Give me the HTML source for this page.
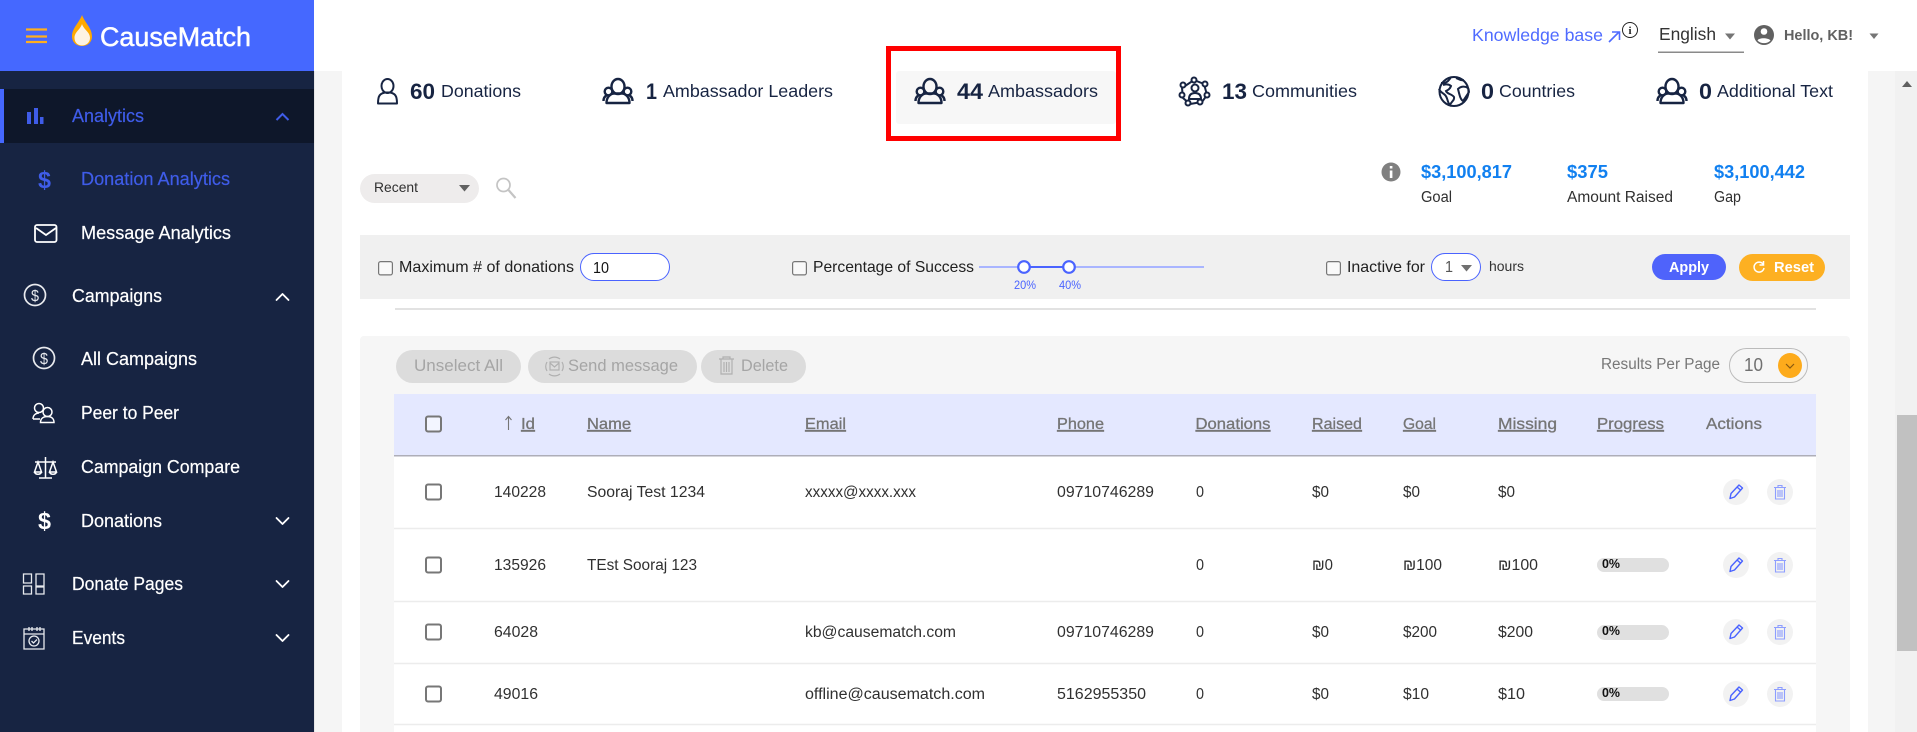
<!DOCTYPE html>
<html lang="en"><head><meta charset="utf-8"><title>CauseMatch</title>
<style>
html,body{margin:0;padding:0;background:#f5f5f5;width:1917px;height:732px;overflow:hidden}
svg{display:block;position:absolute;left:0;top:0}
text{font-family:"Liberation Sans",sans-serif;white-space:pre}
.nav{font-size:18px;fill:#fff;stroke:#fff;stroke-width:.2px}
.blue{fill:#3f5ce8;stroke:#3f5ce8}
.num{font-size:22px;font-weight:700;fill:#172442}
.lab{font-size:17.800px;fill:#172442}
.f{font-size:16px;fill:#212121}
.td{font-size:15.500px;fill:#303030}
.th{font-size:16px;fill:#757575;stroke:#757575;stroke-width:.3px;text-decoration:underline}
.pc{font-size:12.500px;font-weight:700;fill:#111}
.dis{font-size:16.500px;fill:#a5a5a5}
.ic{fill:none;stroke:#172442;stroke-width:2}
.w{fill:none;stroke:#fff;stroke-width:1.8;stroke-linecap:round;stroke-linejoin:round}
</style></head><body>
<svg width="1917" height="732" viewBox="0 0 1917 732" xmlns="http://www.w3.org/2000/svg">
<defs>
<g id="grp" fill="none" stroke="#172442" stroke-width="2.400" stroke-linejoin="round">
<ellipse cx="15" cy="8" rx="6.500" ry="7.500"/><circle cx="5.500" cy="13" r="3.800"/><circle cx="24.500" cy="13" r="3.800"/>
<path d="M0.500 22.500c0-3 1-4.500 3-5.500M29.500 22.500c0-3-1-4.500-3-5.500M3.500 24.500h23c0-5-3-9-7-9.500h-9c-4 .5-7 4.500-7 9.500z"/>
</g>
<g id="chk"><rect x="1" y="1" width="15" height="15" rx="2" fill="#fff" fill-opacity=".55" stroke="#777" stroke-width="2"/></g>
<g id="chs"><rect x=".6" y=".6" width="13.800" height="13.300" rx="2" fill="#fff" fill-opacity=".6" stroke="#767676" stroke-width="1.200"/></g>
<g id="pen">
<circle cx="0" cy="0" r="13" fill="#f2f2f2"/>
<path d="M-6 6.500l1-5L3-7l3.500 3L-1.500 5zM1-5l3.500 3" fill="none" stroke="#4a63ff" stroke-width="1.400" stroke-linejoin="round"/>
</g>
<g id="tr">
<circle cx="0" cy="0" r="13" fill="#f2f2f2"/>
<path d="M-6-4.500H6M-2-4.500v-2h4v2M-4.500-4v11h9v-11M-2-2v7M0-2v7M2-2v7" fill="none" stroke="#8d9dff" stroke-width="1.100"/>
</g>
<g id="dol"><circle cx="0" cy="0" r="10.500" fill="none" stroke="#e8eaee" stroke-width="1.700"/><text x="-4" y="6" font-size="16" fill="#e8eaee" textLength="8" lengthAdjust="spacingAndGlyphs">$</text></g>
</defs>

<!-- page backgrounds -->
<rect x="314" y="0" width="1603" height="71" fill="#fff"/>
<rect x="342" y="71" width="1526" height="661" fill="#fff"/>
<rect x="1895" y="71" width="22" height="661" fill="#f1f1f1"/>
<rect x="1897" y="415" width="20" height="236" fill="#c1c1c1"/>
<path d="M1907 81l5 6h-10z" fill="#606060"/>

<!-- sidebar -->
<rect x="0" y="71" width="314" height="661" fill="#172442"/>
<rect x="314" y="71" width="1" height="661" fill="#e6e6e6"/>
<rect x="0" y="0" width="314" height="71" fill="#4568ff"/>
<path d="M26 29.500h21M26 36.500h21M26 42h21" stroke="#ffae1f" stroke-width="2.200"/>
<path d="M82 15C79 23 72 28 72 36.500 72 42 76 46 82 46s10-4 10-9.500C92 28 85 23 82 15z" fill="#ffa900"/>
<path d="M82 24C80 30 74.500 32 74.500 38 74.500 42.500 78 45.500 82 45.500s8-3 8-7.500C90 32 84 30 82 24z" fill="#fdf3e3"/>
<text x="100" y="46" font-size="27" fill="#fff" stroke="#fff" stroke-width=".5" textLength="151" lengthAdjust="spacingAndGlyphs">CauseMatch</text>

<rect x="0" y="89" width="314" height="54" fill="#0e172a"/>
<rect x="0" y="89" width="4" height="54" fill="#4568ff"/>
<path d="M27 112h4v12h-4zM34 108h4v16h-4zM40 117h3.500v7H40z" fill="#3f5ce8"/>
<text class="nav blue" x="72" y="122" textLength="72" lengthAdjust="spacingAndGlyphs">Analytics</text>
<path d="M276.500 120l6-6 6 6" fill="none" stroke="#3f5ce8" stroke-width="2"/>

<text x="38" y="188" font-size="24" font-weight="700" fill="#3f5ce8" textLength="13" lengthAdjust="spacingAndGlyphs">$</text>
<text class="nav blue" x="81" y="185" textLength="149" lengthAdjust="spacingAndGlyphs">Donation Analytics</text>
<rect x="35" y="225" width="21.500" height="17" rx="2" fill="none" stroke="#fff" stroke-width="1.800"/>
<path d="M36 228l10 7 10-7" fill="none" stroke="#fff" stroke-width="1.800"/>
<text class="nav" x="81" y="239" textLength="150" lengthAdjust="spacingAndGlyphs">Message Analytics</text>

<use href="#dol" x="35" y="295"/>
<text class="nav" x="72" y="302" textLength="90" lengthAdjust="spacingAndGlyphs">Campaigns</text>
<path d="M276.500 300l6-6 6 6" class="w" stroke-width="2"/>
<use href="#dol" x="44" y="358"/>
<text class="nav" x="81" y="365" textLength="116" lengthAdjust="spacingAndGlyphs">All Campaigns</text>

<g fill="none" stroke="#fff" stroke-width="1.500">
<circle cx="39" cy="408" r="4.500"/><circle cx="47.500" cy="412" r="4.500"/>
<path d="M33 419c0-4 3-6 6-6M40.500 422.500c0-4 3-6 7-6s6.500 2 6.500 6zM33 419h7"/>
<path d="M45.500 457v21M39 478h13M35 462h21M38 462l-3.500 10h7zM53 462l-3.500 10h7zM34.500 472c1 3 6 3 7 0M49.500 472c1 3 6 3 7 0"/>
</g>
<text class="nav" x="81" y="419" textLength="98" lengthAdjust="spacingAndGlyphs">Peer to Peer</text>
<text class="nav" x="81" y="473" textLength="159" lengthAdjust="spacingAndGlyphs">Campaign Compare</text>
<text x="38" y="529" font-size="24" font-weight="700" fill="#fff" textLength="13" lengthAdjust="spacingAndGlyphs">$</text>
<text class="nav" x="81" y="527" textLength="81" lengthAdjust="spacingAndGlyphs">Donations</text>
<path d="M276.500 518l6 6 6-6" class="w"/>

<g fill="none" stroke="#e8eaee" stroke-width="1.300">
<path d="M23.500 574h8v9h-8zM36 574h8v12h-8zM23.500 586h8v8h-8zM36 587h8v7h-8z"/>
<path d="M24 629h20v20H24zM24 634h20M29 627v4M32 627v4M37 627v4M40 627v4"/>
<circle cx="34" cy="641" r="5"/><path d="M31.500 641l2 2 3.500-3.500"/>
</g>
<text class="nav" x="72" y="590" textLength="111" lengthAdjust="spacingAndGlyphs">Donate Pages</text>
<path d="M276.500 581l6 6 6-6" class="w"/>
<text class="nav" x="72" y="644" textLength="53" lengthAdjust="spacingAndGlyphs">Events</text>
<path d="M276.500 635l6 6 6-6" class="w"/>

<!-- header right -->
<text x="1472" y="41" font-size="17.500" fill="#4f6bff" textLength="131" lengthAdjust="spacingAndGlyphs">Knowledge base</text>
<path d="M1609 42l10-10M1612 32h7.500v8" fill="none" stroke="#4f6bff" stroke-width="1.600"/>
<circle cx="1630" cy="30" r="7.500" fill="none" stroke="#222" stroke-width="1"/>
<text x="1628.500" y="34" font-size="11" font-weight="700" fill="#222" style="font-family:'Liberation Serif',serif">i</text>
<text x="1659" y="40" font-size="17.400" fill="#333" textLength="57" lengthAdjust="spacingAndGlyphs">English</text>
<path d="M1725 33.500h10l-5 6z" fill="#757575"/>
<rect x="1658" y="51.500" width="86" height="1.500" fill="#8a8a8a"/>
<circle cx="1764" cy="35" r="10" fill="#616161"/>
<circle cx="1764" cy="31.500" r="3.300" fill="#fff"/>
<path d="M1757.500 40.500c1-3 11-3 13 0-3 3.500-10 3.500-13 0z" fill="#fff"/>
<text x="1784" y="40" font-size="14.500" font-weight="700" fill="#616161" textLength="69" lengthAdjust="spacingAndGlyphs">Hello, KB!</text>
<path d="M1869.500 33.500h9l-4.500 5.500z" fill="#757575"/>

<!-- stats row -->
<g class="ic" stroke-width="2.200"><ellipse cx="387.500" cy="86" rx="6" ry="7"/><path d="M378 103.500c0-8 2-10 7-11h5c5 1 7 3 7 11z" stroke-linejoin="round"/></g>
<text class="num" x="410" y="99" textLength="25" lengthAdjust="spacingAndGlyphs">60</text>
<text class="lab" x="441" y="97" textLength="80" lengthAdjust="spacingAndGlyphs">Donations</text>
<use href="#grp" x="603" y="78.500"/>
<text class="num" x="646" y="99" textLength="11" lengthAdjust="spacingAndGlyphs">1</text>
<text class="lab" x="663" y="97" textLength="170" lengthAdjust="spacingAndGlyphs">Ambassador Leaders</text>

<rect x="896" y="71" width="220" height="53" rx="3" fill="#f7f7f7"/>
<rect x="888.500" y="48.500" width="230" height="90" fill="none" stroke="#ff0000" stroke-width="5"/>
<use href="#grp" x="915" y="78.500"/>
<text class="num" x="957" y="99" textLength="26" lengthAdjust="spacingAndGlyphs">44</text>
<text class="lab" x="988" y="97" textLength="110" lengthAdjust="spacingAndGlyphs">Ambassadors</text>

<g class="ic" stroke-width="1.500">
<path d="M1194 80l10 4 3 11-5 7-12 2-7-6-1-10z"/>
<circle cx="1194" cy="80" r="2.500" fill="#fff"/><circle cx="1205" cy="84" r="2.500" fill="#fff"/><circle cx="1207" cy="95" r="2.500" fill="#fff"/><circle cx="1200" cy="102" r="2.500" fill="#fff"/><circle cx="1188" cy="103" r="2.500" fill="#fff"/><circle cx="1182" cy="95" r="2.500" fill="#fff"/><circle cx="1183" cy="85" r="2.500" fill="#fff"/>
<circle cx="1195" cy="88" r="3.500"/><path d="M1189 99c0-4 2-6 6-6s6 2 6 6z"/>
</g>
<text class="num" x="1222" y="99" textLength="25" lengthAdjust="spacingAndGlyphs">13</text>
<text class="lab" x="1252" y="97" textLength="105" lengthAdjust="spacingAndGlyphs">Communities</text>

<g class="ic"><circle cx="1454" cy="91.500" r="14.500"/>
<path d="M1441 83c3 0 5 0 7-2s3-4 3-4M1443 85c3-1 6-1 8 1-1 3-3 4-5 5 1 3 6 3 8 6 1 3-3 5-4 8-3-3-2-7-5-10-2-2-5-3-6-6M1456 78c3 1 5 3 8 2M1458 89c3-3 7-3 10-1 1 2 1 3 1 4-2 3-4 6-6 9-3-2-3-5-4-8z"/></g>
<text class="num" x="1481" y="99" textLength="13" lengthAdjust="spacingAndGlyphs">0</text>
<text class="lab" x="1499" y="97" textLength="76" lengthAdjust="spacingAndGlyphs">Countries</text>
<use href="#grp" x="1657" y="78.500"/>
<text class="num" x="1699" y="99" textLength="13" lengthAdjust="spacingAndGlyphs">0</text>
<text class="lab" x="1717" y="97" textLength="116" lengthAdjust="spacingAndGlyphs">Additional Text</text>

<!-- sort + totals -->
<rect x="360" y="174" width="119" height="29" rx="14.500" fill="#eeecec"/>
<text x="374" y="192" font-size="14" fill="#303030" textLength="44" lengthAdjust="spacingAndGlyphs">Recent</text>
<path d="M459 185h11l-5.500 6.500z" fill="#616161"/>
<circle cx="503.500" cy="185" r="6.500" fill="none" stroke="#c4c4c4" stroke-width="1.700"/>
<path d="M508.500 190l7 8" stroke="#c4c4c4" stroke-width="2.200"/>

<circle cx="1391" cy="172" r="9.500" fill="#808080"/>
<path d="M1389.800 170.500h2.600v7.500h-2.600zM1389.800 166h2.600v2.500h-2.600z" fill="#fff"/>
<g font-size="18" font-weight="700" fill="#1180f0">
<text x="1421" y="178" textLength="91" lengthAdjust="spacingAndGlyphs">$3,100,817</text>
<text x="1567" y="178" textLength="41" lengthAdjust="spacingAndGlyphs">$375</text>
<text x="1714" y="178" textLength="91" lengthAdjust="spacingAndGlyphs">$3,100,442</text>
</g>
<g font-size="15.500" fill="#303030">
<text x="1421" y="202" textLength="31" lengthAdjust="spacingAndGlyphs">Goal</text>
<text x="1567" y="202" textLength="106" lengthAdjust="spacingAndGlyphs">Amount Raised</text>
<text x="1714" y="202" textLength="27" lengthAdjust="spacingAndGlyphs">Gap</text>
</g>

<!-- filter bar -->
<rect x="360" y="235" width="1490" height="64" fill="#f0f0f0"/>
<use href="#chs" x="378" y="261"/>
<text class="f" x="399" y="272" textLength="175" lengthAdjust="spacingAndGlyphs">Maximum # of donations</text>
<rect x="580.500" y="253.500" width="89" height="27" rx="13.500" fill="#fff" stroke="#4a63ff"/>
<text x="593" y="273" font-size="15.500" fill="#111" textLength="16" lengthAdjust="spacingAndGlyphs">10</text>
<use href="#chs" x="792" y="261"/>
<text class="f" x="813" y="272" textLength="161" lengthAdjust="spacingAndGlyphs">Percentage of Success</text>
<rect x="979" y="266" width="225" height="2" fill="#a9b5ff"/>
<rect x="1024" y="266" width="45" height="2" fill="#4a63ff"/>
<circle cx="1024" cy="267" r="5.800" fill="#fff" stroke="#4a63ff" stroke-width="2.200"/>
<circle cx="1069" cy="267" r="5.800" fill="#fff" stroke="#4a63ff" stroke-width="2.200"/>
<text x="1014" y="289" font-size="11.500" fill="#4a63ff" textLength="22" lengthAdjust="spacingAndGlyphs">20%</text>
<text x="1059" y="289" font-size="11.500" fill="#4a63ff" textLength="22" lengthAdjust="spacingAndGlyphs">40%</text>
<use href="#chs" x="1326" y="261"/>
<text class="f" x="1347" y="272" textLength="78" lengthAdjust="spacingAndGlyphs">Inactive for</text>
<rect x="1431.500" y="253.500" width="49" height="27" rx="13.500" fill="#fff" stroke="#4a63ff"/>
<text x="1445" y="272" font-size="15.500" fill="#555" textLength="8" lengthAdjust="spacingAndGlyphs">1</text>
<path d="M1461 265h11l-5.500 6.500z" fill="#707070"/>
<text x="1489" y="271" font-size="14" fill="#333" textLength="35" lengthAdjust="spacingAndGlyphs">hours</text>
<rect x="1652" y="254" width="74" height="26" rx="13" fill="#4f63fb"/>
<text x="1669" y="272" font-size="15" font-weight="700" fill="#fff" textLength="40" lengthAdjust="spacingAndGlyphs">Apply</text>
<rect x="1739" y="254" width="86" height="27" rx="13.500" fill="#fdb022"/>
<path d="M1763 264a5 5 0 1 0 1 4M1763.500 261v4h-4" fill="none" stroke="#fff" stroke-width="1.500"/>
<text x="1774" y="272" font-size="15" font-weight="700" fill="#fff" textLength="40" lengthAdjust="spacingAndGlyphs">Reset</text>

<rect x="395" y="308" width="1421" height="2" fill="#e2e2e2"/>

<!-- table panel -->
<rect x="360" y="336" width="1490" height="400" rx="4" fill="#f6f6f6"/>
<rect x="396" y="350" width="125" height="33" rx="16.500" fill="#dcdcdc"/>
<text class="dis" x="414" y="371" textLength="89" lengthAdjust="spacingAndGlyphs">Unselect All</text>
<rect x="528" y="350" width="169" height="33" rx="16.500" fill="#dcdcdc"/>
<g fill="none" stroke="#b0b0b0" stroke-width="1.200">
<path d="M549 359a9 9 0 0 1 11 0M560 374a9 9 0 0 1-11 0M547 362a9 9 0 0 0 0 9M562 362a9 9 0 0 1 0 9"/>
<rect x="550" y="362" width="9" height="8"/><path d="M550 363l4.500 4 4.500-4"/>
</g>
<text class="dis" x="568" y="371" textLength="110" lengthAdjust="spacingAndGlyphs">Send message</text>
<rect x="701" y="350" width="105" height="33" rx="16.500" fill="#dcdcdc"/>
<path d="M719 359h15M723 359v-2h7v2M721 359v15h11v-15M724 362v10M726.500 362v10M729 362v10" fill="none" stroke="#b0b0b0" stroke-width="1.200"/>
<text class="dis" x="741" y="371" textLength="47" lengthAdjust="spacingAndGlyphs">Delete</text>
<text x="1601" y="369" font-size="15.300" fill="#777" textLength="119" lengthAdjust="spacingAndGlyphs">Results Per Page</text>
<rect x="1729.500" y="348.500" width="78" height="34" rx="17" fill="#f6f6f6" stroke="#bbb"/>
<text x="1744" y="371" font-size="18" fill="#707070" textLength="19" lengthAdjust="spacingAndGlyphs">10</text>
<ellipse cx="1790" cy="365.500" rx="12" ry="12.500" fill="#fdab1c"/>
<path d="M1786 364l4 4 4-4" fill="none" stroke="#8a5a10" stroke-width="1.200"/>

<!-- table -->
<rect x="394" y="394" width="1422" height="338" fill="#fff"/>
<rect x="394" y="394" width="1422" height="61" fill="#e4e8ff"/>
<rect x="394" y="455" width="1422" height="1.500" fill="#aeaeb8"/>
<path d="M394 528.500h1422M394 601.500h1422M394 663.500h1422M394 724.500h1422" stroke="#ececec" stroke-width="1.500"/>
<use href="#chk" x="425" y="415.500"/><use href="#chk" x="425" y="483.500"/><use href="#chk" x="425" y="556.500"/><use href="#chk" x="425" y="623.500"/><use href="#chk" x="425" y="685.500"/>

<path d="M508.500 430v-13M505.500 420l3-3.500 3 3.500" fill="none" stroke="#757575" stroke-width="1.100"/>
<text class="th" x="521" y="429" textLength="14" lengthAdjust="spacingAndGlyphs">Id</text>
<text class="th" x="587" y="429" textLength="44" lengthAdjust="spacingAndGlyphs">Name</text>
<text class="th" x="805" y="429" textLength="41" lengthAdjust="spacingAndGlyphs">Email</text>
<text class="th" x="1057" y="429" textLength="47" lengthAdjust="spacingAndGlyphs">Phone</text>
<text class="th" x="1195.500" y="429" textLength="75" lengthAdjust="spacingAndGlyphs">Donations</text>
<text class="th" x="1312" y="429" textLength="50" lengthAdjust="spacingAndGlyphs">Raised</text>
<text class="th" x="1403" y="429" textLength="33" lengthAdjust="spacingAndGlyphs">Goal</text>
<text class="th" x="1498" y="429" textLength="59" lengthAdjust="spacingAndGlyphs">Missing</text>
<text class="th" x="1597" y="429" textLength="67" lengthAdjust="spacingAndGlyphs">Progress</text>
<text x="1706" y="429" font-size="16" fill="#757575" stroke="#757575" stroke-width=".3" textLength="56" lengthAdjust="spacingAndGlyphs">Actions</text>

<text class="td" x="494" y="497" textLength="52" lengthAdjust="spacingAndGlyphs">140228</text>
<text class="td" x="587" y="497" textLength="118" lengthAdjust="spacingAndGlyphs">Sooraj Test 1234</text>
<text class="td" x="805" y="497" textLength="111" lengthAdjust="spacingAndGlyphs">xxxxx@xxxx.xxx</text>
<text class="td" x="1057" y="497" textLength="97" lengthAdjust="spacingAndGlyphs">09710746289</text>
<text class="td" x="1196" y="497" textLength="8" lengthAdjust="spacingAndGlyphs">0</text>
<text class="td" x="1312" y="497" textLength="17" lengthAdjust="spacingAndGlyphs">$0</text>
<text class="td" x="1403" y="497" textLength="17" lengthAdjust="spacingAndGlyphs">$0</text>
<text class="td" x="1498" y="497" textLength="17" lengthAdjust="spacingAndGlyphs">$0</text>

<text class="td" x="494" y="570" textLength="52" lengthAdjust="spacingAndGlyphs">135926</text>
<text class="td" x="587" y="570" textLength="110" lengthAdjust="spacingAndGlyphs">TEst Sooraj 123</text>
<text class="td" x="1196" y="570" textLength="8" lengthAdjust="spacingAndGlyphs">0</text>
<text class="td" x="1312" y="570" textLength="21" lengthAdjust="spacingAndGlyphs">₪0</text>
<text class="td" x="1403" y="570" textLength="39" lengthAdjust="spacingAndGlyphs">₪100</text>
<text class="td" x="1498" y="570" textLength="40" lengthAdjust="spacingAndGlyphs">₪100</text>

<text class="td" x="494" y="637" textLength="44" lengthAdjust="spacingAndGlyphs">64028</text>
<text class="td" x="805" y="637" textLength="151" lengthAdjust="spacingAndGlyphs">kb@causematch.com</text>
<text class="td" x="1057" y="637" textLength="97" lengthAdjust="spacingAndGlyphs">09710746289</text>
<text class="td" x="1196" y="637" textLength="8" lengthAdjust="spacingAndGlyphs">0</text>
<text class="td" x="1312" y="637" textLength="17" lengthAdjust="spacingAndGlyphs">$0</text>
<text class="td" x="1403" y="637" textLength="34" lengthAdjust="spacingAndGlyphs">$200</text>
<text class="td" x="1498" y="637" textLength="35" lengthAdjust="spacingAndGlyphs">$200</text>

<text class="td" x="494" y="699" textLength="44" lengthAdjust="spacingAndGlyphs">49016</text>
<text class="td" x="805" y="699" textLength="180" lengthAdjust="spacingAndGlyphs">offline@causematch.com</text>
<text class="td" x="1057" y="699" textLength="89" lengthAdjust="spacingAndGlyphs">5162955350</text>
<text class="td" x="1196" y="699" textLength="8" lengthAdjust="spacingAndGlyphs">0</text>
<text class="td" x="1312" y="699" textLength="17" lengthAdjust="spacingAndGlyphs">$0</text>
<text class="td" x="1403" y="699" textLength="26" lengthAdjust="spacingAndGlyphs">$10</text>
<text class="td" x="1498" y="699" textLength="27" lengthAdjust="spacingAndGlyphs">$10</text>

<rect x="1597" y="558" width="72" height="14" rx="7" fill="#e0e0e0"/>
<text class="pc" x="1602" y="568" textLength="18" lengthAdjust="spacingAndGlyphs">0%</text>
<rect x="1597" y="625" width="72" height="15" rx="7.500" fill="#e0e0e0"/>
<text class="pc" x="1602" y="635" textLength="18" lengthAdjust="spacingAndGlyphs">0%</text>
<rect x="1597" y="687" width="72" height="14" rx="7" fill="#e0e0e0"/>
<text class="pc" x="1602" y="697" textLength="18" lengthAdjust="spacingAndGlyphs">0%</text>

<use href="#pen" x="1736" y="492"/><use href="#tr" x="1780" y="492"/>
<use href="#pen" x="1736" y="565"/><use href="#tr" x="1780" y="565"/>
<use href="#pen" x="1736" y="632"/><use href="#tr" x="1780" y="632"/>
<use href="#pen" x="1736" y="694"/><use href="#tr" x="1780" y="694"/>
</svg>
</body></html>
